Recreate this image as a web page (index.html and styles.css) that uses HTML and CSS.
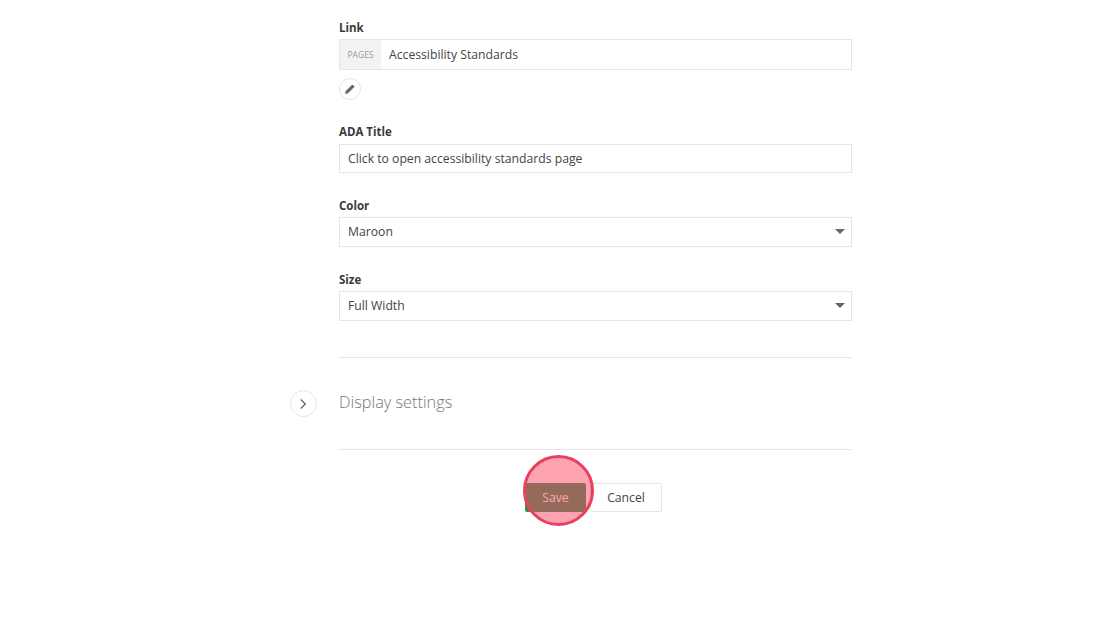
FILE: index.html
```html
<!DOCTYPE html>
<html lang="en">
<head>
<meta charset="utf-8">
<title>Link settings</title>
<link rel="stylesheet" href="styles.css">
</head>
<body>
<main class="form">
  <div class="field field-link">
    <label class="label">Link</label>
    <div class="input input-link"><span class="addon">PAGES</span><span class="value">Accessibility Standards</span></div>
    <button class="edit" aria-label="Edit">
      <svg width="12" height="12" viewBox="0 0 12 12"><path d="M1 11l.7-3L7.800 1.900a.8.8 0 0 1 1.100 0l1.200 1.200a.8.8 0 0 1 0 1.100L4 10.300z" fill="#6a6a6a"/></svg>
    </button>
  </div>
  <div class="field field-ada">
    <label class="label label-ada">ADA Title</label>
    <div class="input input-ada"><span class="value">Click to open accessibility standards page</span></div>
  </div>
  <div class="field field-color">
    <label class="label">Color</label>
    <div class="input select"><span class="value">Maroon</span><span class="caret"></span></div>
  </div>
  <div class="field">
    <label class="label">Size</label>
    <div class="input select"><span class="value">Full Width</span><span class="caret"></span></div>
  </div>
  <section class="settings">
    <button class="toggle" aria-label="Expand">
      <svg width="8" height="12" viewBox="0 0 8 12"><path d="M0.800 1.500L5.300 6l-4.500 4.500" fill="none" stroke="#666" stroke-width="1.300"/></svg>
    </button>
    <h2 class="settings-title">Display settings</h2>
  </section>
  <div class="actions">
    <div class="save-wrap">
      <button class="btn btn-save">Save</button>
      <span class="highlight"></span>
    </div>
    <button class="btn btn-cancel">Cancel</button>
  </div>
</main>
</body>
</html>
```
FILE: styles.css
```css
* { box-sizing: border-box; }
html, body { margin: 0; padding: 0; background: #fff; }
body { height: 627px; overflow: hidden; font-family: "Open Sans", sans-serif; color: #444; }
.form { width: 513px; margin-left: 339px; padding-top: 19px; }
.field { margin-bottom: 22px; }
.field-link { margin-bottom: 23px; }
.field-ada { margin-bottom: 24px; }
.field-color { margin-bottom: 24px; }
.label { display: block; height: 18px; line-height: 18px; font-size: 11.500px; font-weight: 700; color: #3a3a3a; margin-bottom: 2px; }
.label-ada { margin-bottom: 3px; }
.input { display: flex; align-items: center; height: 30px; border: 1px solid #e5e5e5; font-size: 12.200px; color: #444; padding-left: 8px; background: #fff; }
.input-link { padding-left: 0; height: 31px; }
.input-ada { height: 29px; }
.addon { display: flex; align-items: center; justify-content: center; width: 41px; height: 100%; background: #f3f3f3; color: #999; font-size: 8.500px; margin-right: 8px; }
.value { white-space: nowrap; }
.select { justify-content: space-between; padding-right: 6px; padding-bottom: 2px; }
.caret { width: 0; height: 0; border-left: 5px solid transparent; border-right: 5px solid transparent; border-top: 5px solid #666; }
.edit { display: flex; align-items: center; justify-content: center; width: 22px; height: 22px; margin-top: 8px; padding: 0; border: 1px solid #e5e5e5; border-radius: 50%; background: #fff; }
.settings { position: relative; height: 93px; margin-top: 36px; border-top: 1px solid #e5e5e5; border-bottom: 1px solid #e5e5e5; display: flex; align-items: center; }
.settings-title { margin: 0 0 4px; font-size: 16.300px; font-weight: 300; color: #777; }
.toggle { position: absolute; left: -49px; top: 32px; display: flex; align-items: center; justify-content: center; width: 27px; height: 27px; padding: 0; border: 1px solid #e5e5e5; border-radius: 50%; background: #fff; }
.actions { display: flex; justify-content: center; gap: 4px; margin-top: 33px; padding-right: 4px; }
.save-wrap { position: relative; }
.btn { display: block; height: 29px; padding: 0; border-radius: 2px; font-family: inherit; font-size: 12.200px; }
.btn-save { width: 61px; border: 0; background: #2f9150; color: #fff; }
.btn-cancel { width: 72px; border: 1px solid #e5e5e5; background: #fff; color: #444; }
.highlight { position: absolute; left: -2px; top: -28px; width: 71px; height: 71px; border: 3px solid #e8405f; border-radius: 50%; background: rgba(250, 70, 100, 0.5); }
```
